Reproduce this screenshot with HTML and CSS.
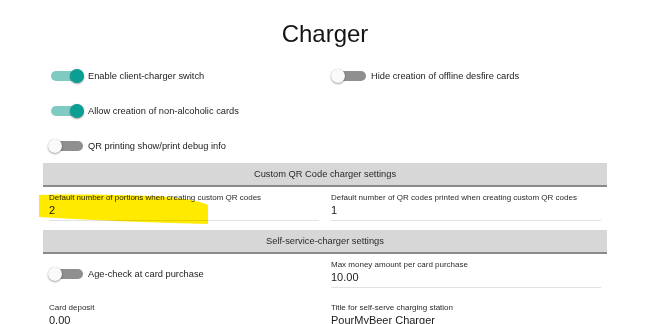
FILE: index.html
```html
<!DOCTYPE html>
<html>
<head>
<meta charset="utf-8">
<link rel="stylesheet" href="styles.css">
</head>
<body>
<div class="page">
  <h1 class="title">Charger</h1>
  <div class="container">
    <div class="grid toggles">
      <div class="col">
        <div class="toggle-row"><span class="switch on"><span class="track"></span><span class="thumb"></span></span><span class="toggle-label">Enable client-charger switch</span></div>
        <div class="toggle-row"><span class="switch on"><span class="track"></span><span class="thumb"></span></span><span class="toggle-label">Allow creation of non-alcoholic cards</span></div>
        <div class="toggle-row"><span class="switch"><span class="track"></span><span class="thumb"></span></span><span class="toggle-label">QR printing show/print debug info</span></div>
      </div>
      <div class="col">
        <div class="toggle-row"><span class="switch"><span class="track"></span><span class="thumb"></span></span><span class="toggle-label">Hide creation of offline desfire cards</span></div>
      </div>
    </div>

    <div class="section-header">Custom QR Code charger settings</div>
    <div class="grid fields first">
      <div class="col">
        <div class="field">
          <div class="field-label">Default number of portions when creating custom QR codes</div>
          <div class="field-value">2</div>
        </div>
      </div>
      <div class="col">
        <div class="field">
          <div class="field-label">Default number of QR codes printed when creating custom QR codes</div>
          <div class="field-value">1</div>
        </div>
      </div>
    </div>

    <div class="section-header">Self-service-charger settings</div>
    <div class="grid fields second">
      <div class="col center">
        <div class="toggle-row short"><span class="switch"><span class="track"></span><span class="thumb"></span></span><span class="toggle-label">Age-check at card purchase</span></div>
      </div>
      <div class="col">
        <div class="field">
          <div class="field-label">Max money amount per card purchase</div>
          <div class="field-value">10.00</div>
        </div>
      </div>
      <div class="col">
        <div class="field">
          <div class="field-label">Card deposit</div>
          <div class="field-value">0.00</div>
        </div>
      </div>
      <div class="col">
        <div class="field">
          <div class="field-label">Title for self-serve charging station</div>
          <div class="field-value">PourMyBeer Charger</div>
        </div>
      </div>
    </div>
  </div>
  <svg class="highlight" width="670" height="324" viewBox="0 0 670 324">
    <path d="M39,195 C80,194 120,195 152,196 Q192,198 208,205 L208,224 Q120,222 39,217 Z" fill="#ffea00"/>
  </svg>
</div>
</body>
</html>
```

FILE: styles.css
```css
html, body {
  margin: 0;
  padding: 0;
  background: #ffffff;
}

body {
  font-family: "Liberation Sans", Arial, sans-serif;
  color: #222222;
  overflow: hidden;
}

.page {
  position: relative;
  width: 650px;
  height: 324px;
  overflow: hidden;
}

.title {
  margin: 20px 0 10px;
  font-size: 24px;
  line-height: 28px;
  font-weight: normal;
  text-align: center;
  color: #151515;
}

.container {
  width: 564px;
  margin: 0 auto;
}

.grid {
  display: grid;
  grid-template-columns: 1fr 1fr;
}

.col {
  padding: 0 6px;
  min-width: 0;
}

.col.center {
  display: flex;
  align-items: center;
}

.toggle-row {
  display: flex;
  align-items: center;
  gap: 4px;
  height: 35px;
}

.toggle-row.short {
  height: 29px;
}

.toggles .col:first-child .toggle-row,
.second .toggle-row {
  margin-left: -1px;
}

.switch {
  position: relative;
  flex: 0 0 36px;
  width: 36px;
  height: 14px;
}

.track {
  position: absolute;
  left: 3px;
  top: 2px;
  width: 32px;
  height: 10px;
  border-radius: 5px;
  background: #8f8f8f;
}

.thumb {
  position: absolute;
  left: 0;
  top: 0;
  width: 14px;
  height: 14px;
  border-radius: 50%;
  background: #fafafa;
  box-shadow: 0 1px 2px rgba(0, 0, 0, 0.35), 0 0 1px rgba(0, 0, 0, 0.2);
}

.switch.on .track {
  background: #7fcbc3;
}

.switch.on .thumb {
  left: 22px;
  background: #0b9e93;
}

.toggle-label {
  font-size: 9.3px;
  color: #222222;
  white-space: nowrap;
}

.section-header {
  height: 22px;
  line-height: 22px;
  background: #d7d7d7;
  border-bottom: 2px solid #8a8a8a;
  text-align: center;
  font-size: 9.3px;
  color: #2a2a2a;
}

.fields {
  row-gap: 14px;
}

.fields.first {
  margin: 5px 0 9px;
}

.fields.second {
  margin-top: 5px;
}

.field {
  padding-bottom: 3px;
  border-bottom: 1px solid #e2e2e2;
}

.field-label {
  font-size: 8px;
  line-height: 11px;
  color: #2a2a2a;
  white-space: nowrap;
}

.field-value {
  font-size: 11px;
  line-height: 14px;
  color: #1a1a1a;
}

.highlight {
  position: absolute;
  left: 0;
  top: 0;
  mix-blend-mode: multiply;
  pointer-events: none;
}
```
